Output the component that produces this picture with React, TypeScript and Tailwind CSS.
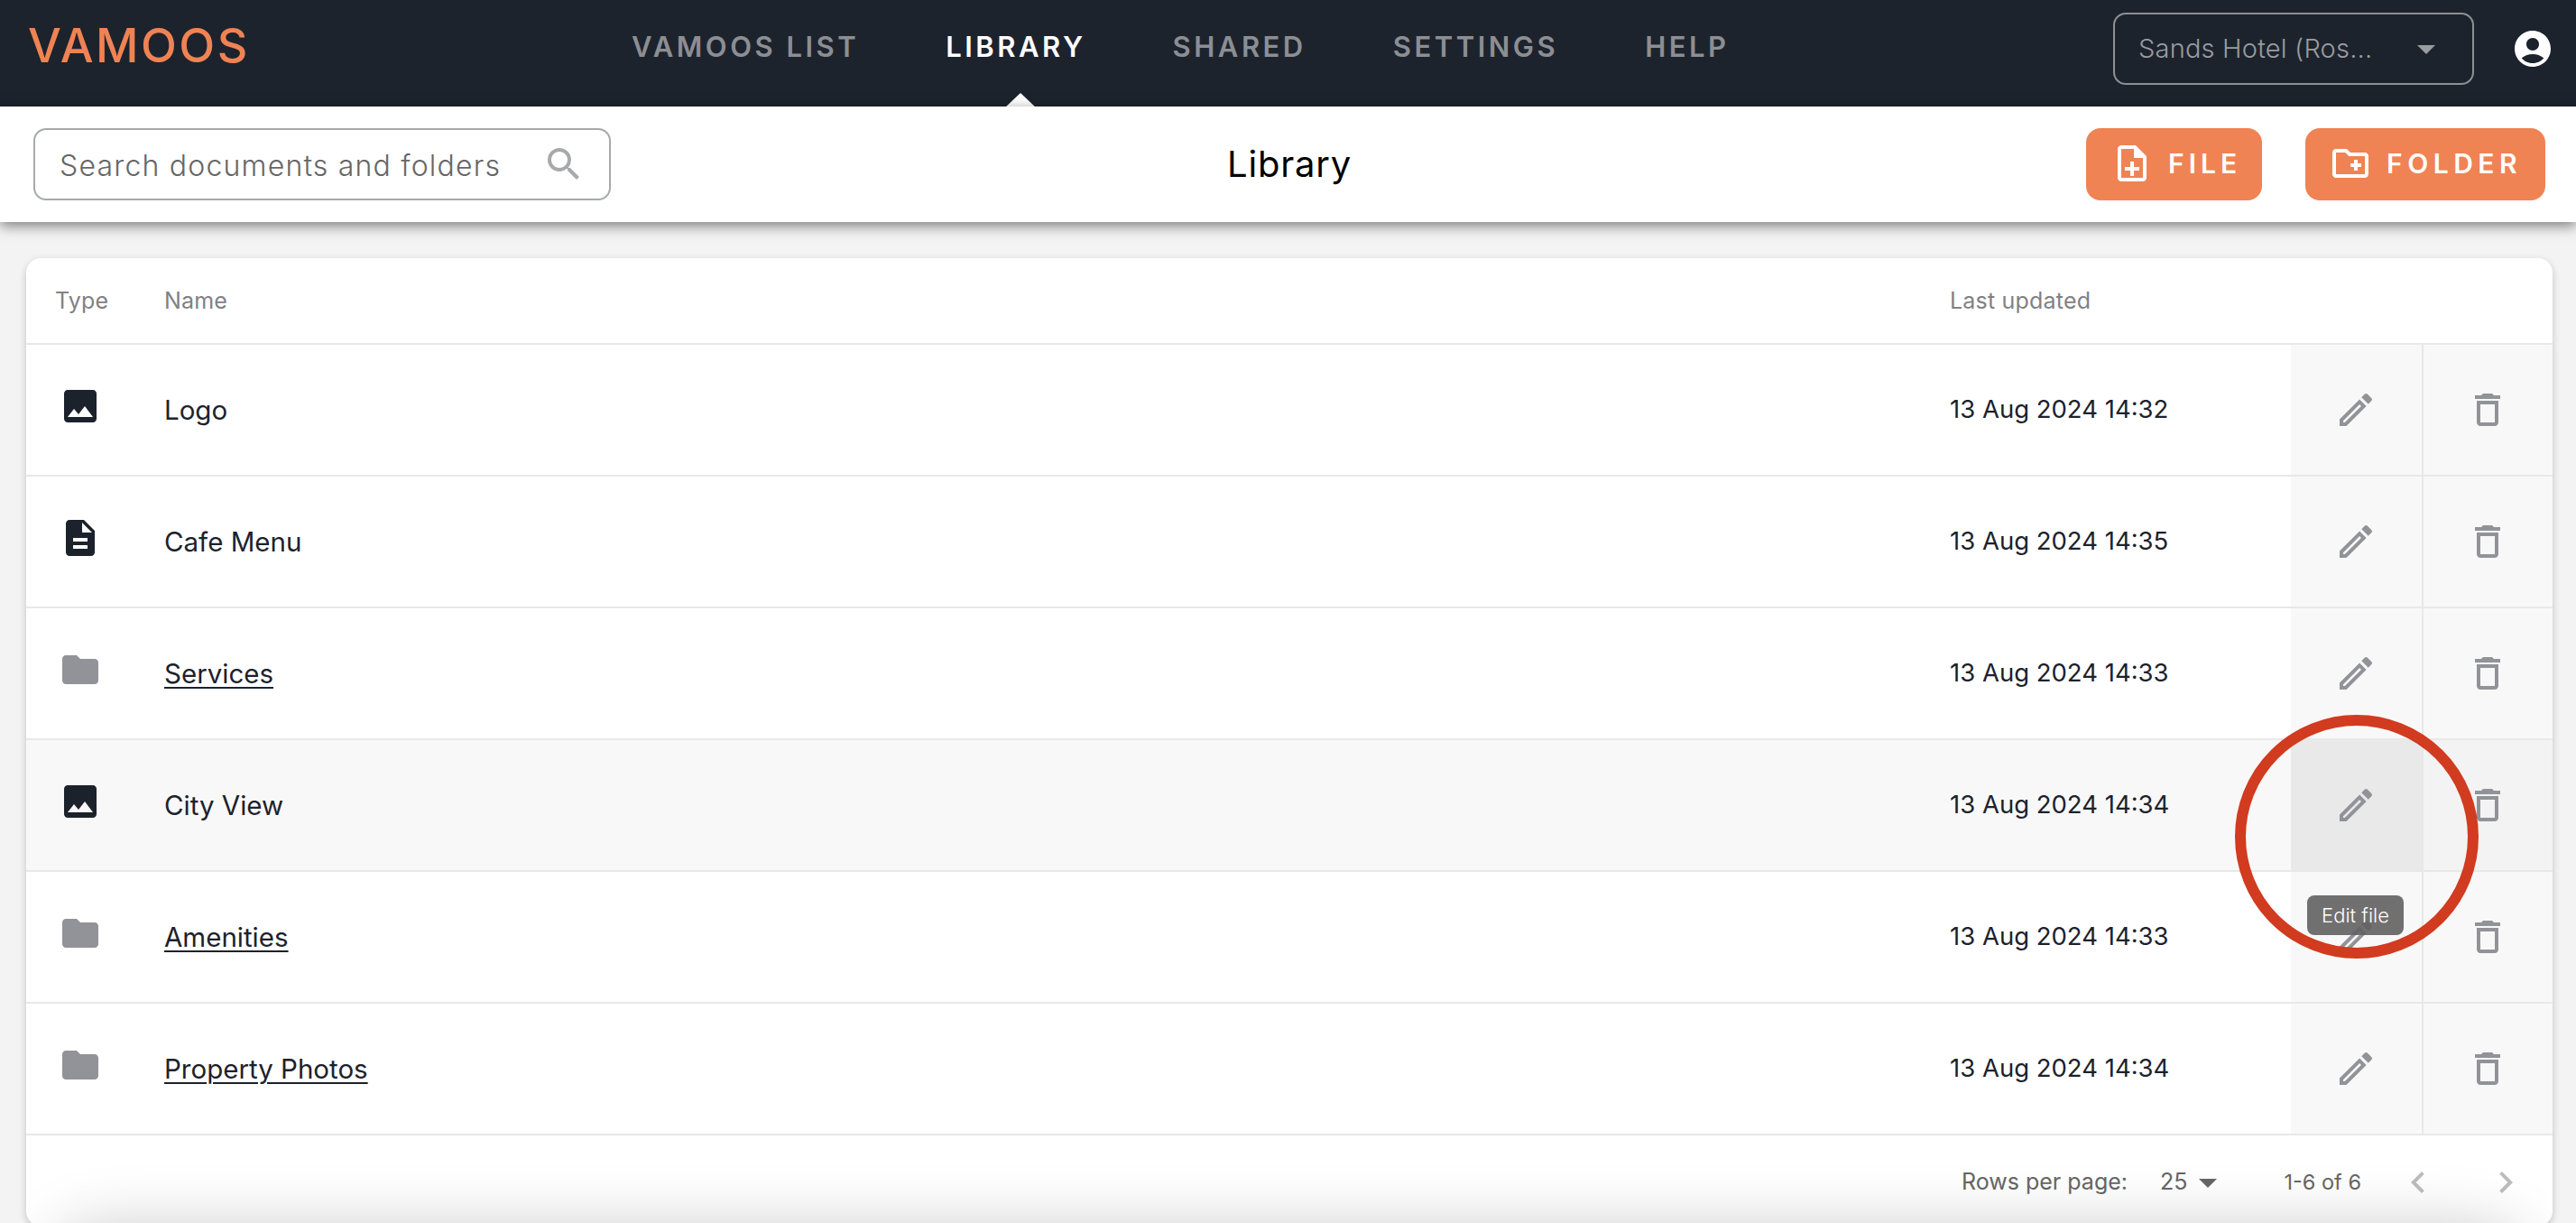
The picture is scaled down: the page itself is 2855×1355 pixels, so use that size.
import {
  MdAccountCircle,
  MdArrowDropDown,
  MdChevronLeft,
  MdChevronRight,
  MdDescription,
  MdFolder,
  MdImage,
  MdOutlineCreateNewFolder,
  MdOutlineDelete,
  MdOutlineEdit,
  MdOutlineNoteAdd,
  MdSearch,
} from 'react-icons/md'

type ItemType = 'image' | 'doc' | 'folder'

interface LibraryItem {
  name: string
  type: ItemType
  updated: string
}

const navItems = ['VAMOOS LIST', 'LIBRARY', 'SHARED', 'SETTINGS', 'HELP']

const items: LibraryItem[] = [
  { name: 'Logo', type: 'image', updated: '13 Aug 2024 14:32' },
  { name: 'Cafe Menu', type: 'doc', updated: '13 Aug 2024 14:35' },
  { name: 'Services', type: 'folder', updated: '13 Aug 2024 14:33' },
  { name: 'City View', type: 'image', updated: '13 Aug 2024 14:34' },
  { name: 'Amenities', type: 'folder', updated: '13 Aug 2024 14:33' },
  { name: 'Property Photos', type: 'folder', updated: '13 Aug 2024 14:34' },
]

function TypeIcon({ type }: { type: ItemType }) {
  if (type === 'image') return <MdImage size={48} className="text-[#1c222c]" />
  if (type === 'doc') return <MdDescription size={48} className="text-[#1c222c]" />
  return <MdFolder size={48} className="text-[#929398]" />
}

function Row({ item, hovered }: { item: LibraryItem; hovered: boolean }) {
  return (
    <div className={`flex h-[146px] items-center border-b-2 border-[#e8e8e8] ${hovered ? 'bg-[#f8f8f8]' : 'bg-white'}`}>
      <div className="w-[153px] pb-[8px] pl-[36px]">
        <TypeIcon type={item.type} />
      </div>
      <div className="flex-1 text-[29.5px] text-[#1c222c]">
        {item.type === 'folder' ? (
          <span className="underline decoration-2 underline-offset-[4px]">{item.name}</span>
        ) : (
          item.name
        )}
      </div>
      <div className="w-[378px] text-[27.5px] text-[#1c222c]">{item.updated}</div>
      <div className={`flex h-full w-[145px] items-center justify-center pr-[2px] ${hovered ? 'bg-[#e9e9e9]' : 'bg-[#f8f8f8]'}`}>
        <MdOutlineEdit size={48} className="text-[#929398]" />
      </div>
      <div className={`flex h-full w-[145px] items-center justify-center border-l-2 border-[#e8e8e8] pr-[2px] ${hovered ? 'bg-[#f3f3f3]' : 'bg-[#f8f8f8]'}`}>
        <MdOutlineDelete size={48} className="text-[#929398]" />
      </div>
    </div>
  )
}

export default function App() {
  return (
    <div className="relative h-[1355px] w-full overflow-hidden bg-[#f3f3f3] font-['Inter',sans-serif]">
      <header className="flex h-[118px] items-center bg-[#1d232d] pr-[24px]">
        <div className="w-[700px] pb-[16px] pl-[31px]">
          <span className="text-[52px] font-medium tracking-[2.5px] text-[#ef8354]">VAMOOS</span>
        </div>
        <nav className="flex gap-[96px] pb-[13px]">
          {navItems.map((label) => (
            <div
              key={label}
              className={`relative text-[31px] font-semibold tracking-[3.5px] ${label === 'LIBRARY' ? 'text-white' : 'text-[#8c8e93]'}`}
            >
              {label}
              {label === 'LIBRARY' && (
                <span className="absolute -bottom-[44px] left-1/2 ml-[-13px] h-0 w-0 border-x-[18px] border-b-[17px] border-x-transparent border-b-white" />
              )}
            </div>
          ))}
        </nav>
        <div className="mb-[10px] ml-auto flex h-[80px] w-[400px] items-center justify-between rounded-[14px] border-2 border-[#8e9094] pl-[26px] pr-[27px] text-[29px] font-light tracking-[0.2px] text-[#9a9ca0]">
          <span>Sands Hotel (Ros...</span>
          <MdArrowDropDown size={48} className="text-[#9a9ca0]" />
        </div>
        <MdAccountCircle size={48} className="mb-[10px] ml-[41px] text-white" />
      </header>

      <div className="relative z-10 flex h-[128px] items-center justify-between bg-white pl-[37px] pr-[34px] shadow-[0_4px_14px_rgba(0,0,0,0.5)]">
        <div className="flex h-[80px] w-[640px] items-center justify-between rounded-[14px] border-2 border-[#a7a9ac] pl-[27px] pr-[26px]">
          <span className="pt-[4px] text-[32px] font-light tracking-[1.2px] text-[#666666]">Search documents and folders</span>
          <MdSearch size={48} className="text-[#a7a9ac]" />
        </div>
        <h1 className="absolute left-[1360px] text-[40px] font-normal tracking-[0.8px] text-black">Library</h1>
        <div className="flex gap-[48px]">
          <button className="flex h-[80px] w-[195px] items-center rounded-[16px] bg-[#ef8354] pb-[2px] pl-[27px] text-[30px] font-semibold tracking-[5px] text-white">
            <MdOutlineNoteAdd size={48} className="mr-[16px]" />
            FILE
          </button>
          <button className="flex h-[80px] w-[266px] items-center rounded-[16px] bg-[#ef8354] pb-[2px] pl-[26px] text-[30px] font-semibold tracking-[5.5px] text-white">
            <MdOutlineCreateNewFolder size={48} className="mr-[16px]" />
            FOLDER
          </button>
        </div>
      </div>

      <main className="pl-[29px] pr-[26px] pt-[40px]">
        <div className="relative h-[1072px] overflow-hidden rounded-[16px] bg-white shadow-[0_3px_9px_rgba(0,0,0,0.2)]">
          <div className="flex h-[96px] items-center border-b-2 border-[#e8e8e8] pt-[2px] text-[25px] tracking-[0.2px] text-[#808185]">
            <div className="w-[153px] pl-[32px]">Type</div>
            <div className="flex-1">Name</div>
            <div className="w-[668px]">Last updated</div>
          </div>

          {items.map((item) => (
            <Row key={item.name} item={item} hovered={item.name === 'City View'} />
          ))}

          <div className="flex h-[102px] items-center justify-end pr-[28px] pt-[2px] text-[25px] text-[#666666]">
            <span>Rows per page:</span>
            <span className="ml-[36px]">25</span>
            <MdArrowDropDown size={48} className="-ml-[1px] text-[#666666]" />
            <span className="ml-[60px] text-[23.5px]">1-6 of 6</span>
            <MdChevronLeft size={48} className="ml-[39px] text-[#bdbdbd]" />
            <MdChevronRight size={48} className="ml-[49px] text-[#bdbdbd]" />
          </div>

          <div className="absolute left-[30px] right-[30px] top-[1076px] h-[100px] rounded-[60px] bg-white shadow-[0_0_70px_rgba(0,0,0,0.22)]" />
        </div>
      </main>

      <div className="absolute left-[2557px] top-[992px] flex h-[44px] w-[107px] items-center justify-center rounded-[8px] bg-[#616161]/90 text-[22px] font-light text-white">
        Edit file
      </div>
      <div className="absolute left-[2477px] top-[792px] h-[270px] w-[270px] rounded-full border-[12px] border-[#d13b1f]" />
    </div>
  )
}
